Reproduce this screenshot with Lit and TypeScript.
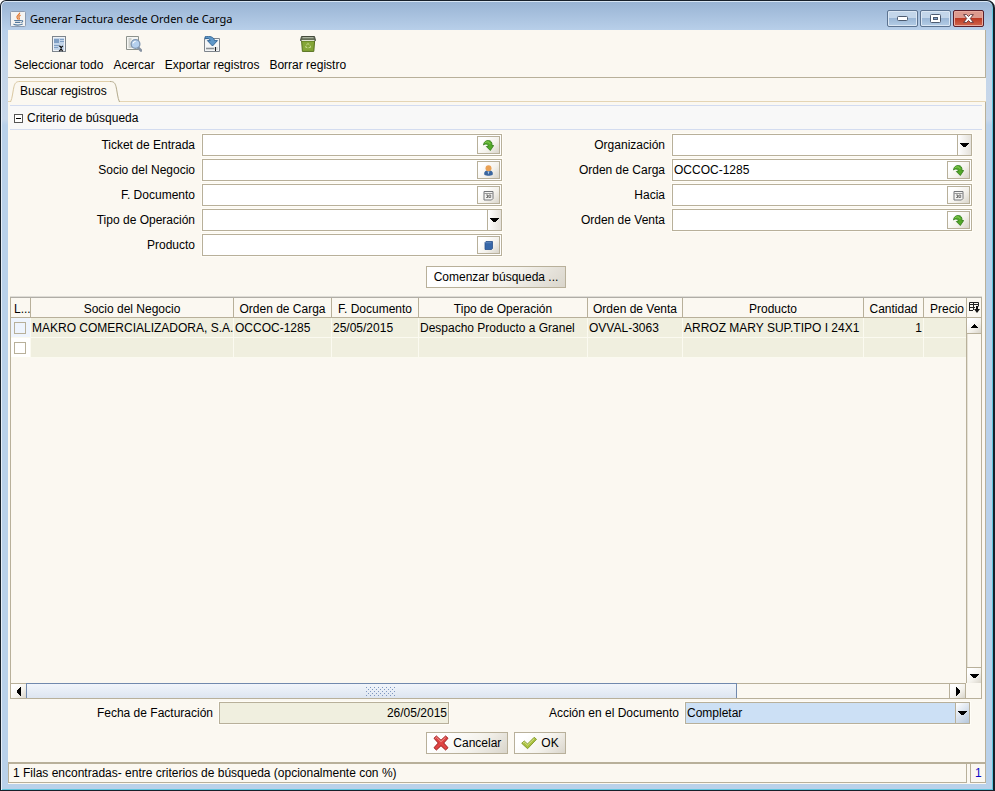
import { LitElement, html, svg, css } from "lit";
import { customElement } from "lit/decorators.js";

const icons = {
  java: svg`<rect x=".5" y=".5" width="15" height="15" rx="1" fill="#f4f4f2" stroke="#8c9bb0"/>
    <path d="M9.6 1.6c.6 2-3.6 2.8-2.6 5 .3.7 1 1.2 1 2M10.600 4.200c-1.800.9-2.200 1.700-1.400 2.800.4.7.1 1.200-.4 1.600" fill="none" stroke="#e2762c" stroke-width="1.200"/>
    <path d="M4.200 9.500h7M5 11.400h5.400M11.400 9.600c1.800-.3 1.800 1.500-.2 1.900M3.400 13.300c2.500.9 7 .8 9.300-.2" fill="none" stroke="#557a9e" stroke-width="1.100"/>`,
  select: svg`<rect x="1.500" y=".5" width="13" height="15" fill="#eef2f7" stroke="#7d858d"/>
    <rect x="3" y="2" width="10" height="12" fill="#c3d5e9"/>
    <path d="M3 3h5v4H3zM9 3h4v1H9zM9 5h4v1H9zM3 9h5v1H3zM3 11h4v1H3z" fill="#7f9fc4"/>
    <path d="M8 10l1.500.5L11 14.500l1 .5M12 10l-1.200.8L9 14.500 8 15" fill="none" stroke="#111" stroke-width="1.100"/>`,
  zoom: svg`<path d="M.5.500h12v13H.5z" fill="#f5f6f3" stroke="#8d928c"/>
    <path d="M2.500 3h3M2.500 5h2M2.500 7h2M2.500 9h2M2.500 11h4" stroke="#a9ada8"/>
    <path d="M12 11.500l3 3" stroke="#8793a2" stroke-width="2.600" stroke-linecap="round"/>
    <circle cx="9.500" cy="8" r="4.400" fill="#b5d0ee" stroke="#7f95b0" stroke-width="1.300"/>
    <path d="M7 7.500a2.600 2.600 0 0 1 2.600-2.100" fill="none" stroke="#fff"/>`,
  exportar: svg`<path d="M.5 2.500h15v13H.5z" fill="#f3f5f6" stroke="#7e858c"/>
    <path d="M2 11h12v3H2z" fill="#d5d8d9"/><path d="M2 12.500h8" stroke="#8a9095"/><path d="M11.500 11v4" stroke="#222"/>
    <path d="M1 .8C5.500-.4 10.200 1 10.500 4.600h3L8.500 10 3.400 4.600h2.800C5.900 2.800 4 2 1 2.800z" fill="#5e97c8" stroke="#2d6192" stroke-width=".9"/>`,
  borrar: svg`<path d="M1.600 5h13l-.8 10.400H2.400z" fill="#84a637" stroke="#56701f"/>
    <path d="M1.500.500h13l1 4H.5z" fill="#667059" stroke="#454b3c"/><path d="M2.500 1.700h11" stroke="#b9c1ad"/>
    <path d="M1.500 4.500h13" stroke="#dfe5d2"/>
    <path d="M6.400 9.300l1.400-1.900 1.500 1.300M10.200 9.600l.5 1.700-2.200.5M7.400 11.800l-1.800-.6.400-1.200" fill="none" stroke="#c5d88d"/>`,
  go: svg`<path d="M.5 5C.8 1.600 3.200.4 5.400.5 8.300.6 9.200 2.600 9 5.500h1.700L7.300 10.500 3.300 6.500h1.900C5.200 4.200 3 3.300.5 5z" fill="#52a829" stroke="#2f7a16" stroke-width=".8"/>
    <path d="M1.800 3c1.400-1.600 4.600-1.600 5.200.8" fill="none" stroke="#93d35d"/>`,
  person: svg`<path d="M1.500 10c-1-2.600.6-4.300 2-4.600h4c1.500.3 3 2 2 4.600-2 .9-6 .9-8 0z" fill="#3a669f"/>
    <circle cx="5.500" cy="3.300" r="3" fill="#eaa155"/><path d="M4.500 6.500h2l-1 3z" fill="#b5cbe6"/>`,
  calendar: svg`<path d="M1 1.500h9v7l-1.500 1.500H1z" fill="#f4f4f2" stroke="#74777a"/><path d="M1 3.500h9" stroke="#999"/>
    <path d="M3 5h2v1.200H4h1v1.300H3M6 5h1.700v2.500H6z" fill="none" stroke="#555" stroke-width=".7"/>`,
  product: svg`<path d="M2 2.500L3 1.500h6.500v7l-1 1H2z" fill="#3767a8" stroke="#28508c" stroke-width=".8"/><path d="M2.300 2.700h6" stroke="#5f87bb"/>`,
  cancel: svg`<path d="M1 3.300L3.400 1 8 5.300 12.600 1 15 3.300 10.700 8l4.300 4.700-2.400 2.300L8 10.700 3.400 15 1 12.700 5.300 8z" fill="#e04444" stroke="#9c1b1b"/>
    <path d="M2.300 3.400L3.500 2.300 8 6.600l4.500-4.300" fill="none" stroke="#f49b94"/>`,
  ok: svg`<path d="M.7 8.300L3.300 6l3.200 3L13.200 2.300l2.300 2L6.600 13.700z" fill="#a9c03e" stroke="#7d9427" stroke-width=".9"/>
    <path d="M2 8l1.300-.9 3.200 3 6.800-6.600" fill="none" stroke="#d7e48a"/>`,
  down: svg`<path d="M0 0h9v1H8v1H7v1H6v1H3V3H2V2H1V1H0z"/>`,
  up: svg`<path d="M4 0h1v1h1v1h1v1h1v1H1V3h1V2h1V1h1z"/>`,
  left: svg`<path d="M4 0v9H3V8H2V7H1V6H0V3h1V2h1V1h1V0z"/>`,
  right: svg`<path d="M0 0v9h1V8h1V7h1V6h1V3H3V2H2V1H1V0z"/>`,
  columns: svg`<path d="M.5 8.500v-8h9v4M0 2.500h10M0 5.500h6M0 8.500h4M4.500 0v8" fill="none" stroke="#222"/>
    <path d="M7 4h2v3h2L8 11 5 7h2z" fill="#111"/>`,
  min: svg`<rect x=".5" y=".5" width="10" height="4" rx="1" fill="#fff" stroke="#4d5b70"/>`,
  max: svg`<rect x=".5" y=".5" width="10" height="8" rx="1" fill="#fff" stroke="#4d5b70"/><rect x="3.500" y="3.500" width="4" height="2" fill="#7ea0c8" stroke="#4d5b70"/>`,
  close: svg`<path d="M.6.600h3L5.500 2.500 7.400.6h3L7.300 4.500l3.100 3.900h-3L5.500 6.500 3.600 8.400h-3l3.100-3.900z" fill="#fff" stroke="#5c3338" stroke-width=".9"/>`,
};

const icon = (name: keyof typeof icons, w = 16, h = w) =>
  html`<svg width=${w} height=${h} viewBox="0 0 ${w} ${h}" aria-hidden="true">${icons[name]}</svg>`;

type Field = { id: string; label: string; kind: "go" | "person" | "calendar" | "product" | "combo"; value?: string };

const FIELDS: Field[] = [
  { id: "ticket", label: "Ticket de Entrada", kind: "go" },
  { id: "org", label: "Organización", kind: "combo" },
  { id: "socio", label: "Socio del Negocio", kind: "person" },
  { id: "carga", label: "Orden de Carga", kind: "go", value: "OCCOC-1285" },
  { id: "fecha", label: "F. Documento", kind: "calendar" },
  { id: "hacia", label: "Hacia", kind: "calendar" },
  { id: "tipo", label: "Tipo de Operación", kind: "combo" },
  { id: "venta", label: "Orden de Venta", kind: "go" },
  { id: "producto", label: "Producto", kind: "product" },
];

const COLUMNS = ["L...", "Socio del Negocio", "Orden de Carga", "F. Documento", "Tipo de Operación", "Orden de Venta", "Producto", "Cantidad", "Precio"];
const WIDTHS = [20, 203, 98, 87, 169, 95, 181, 60, 49];
const ROWS = [
  ["MAKRO COMERCIALIZADORA, S.A.", "OCCOC-1285", "25/05/2015", "Despacho Producto a Granel", "OVVAL-3063", "ARROZ MARY SUP.TIPO I 24X1", "1", ""],
  ["", "", "", "", "", "", "", ""],
];

@customElement("app-root")
export class AppRoot extends LitElement {
  static styles = css`
    :host {
      display: block;
      height: 100vh;
      min-height: 560px;
      font: 12px/16px "Liberation Sans", Arial, sans-serif;
      color: #000;
      --bg: #fbf8f1;
      --line: #b8b09a;
      --face: linear-gradient(135deg, #fff 20%, #f4f2ec 60%, #d9d5cb);
    }
    * { box-sizing: border-box; }
    svg { display: block; flex: none; }
    button, input, select { font: inherit; color: inherit; margin: 0; padding: 0; border-radius: 0; }
    button { display: flex; align-items: center; justify-content: center; white-space: nowrap; }

    .window {
      height: 100%;
      display: flex;
      flex-direction: column;
      padding: 0 7px 6px 6px;
      background: linear-gradient(#98b3d3, #b9d0ea 30px, #c3d5e9 60px, #c9d8ea 118px, #b9d1ea 124px);
      border: 1px solid #17202a;
      border-right-width: 2px;
      border-radius: 6px 8px 0 0;
      box-shadow: inset 0 1px #d8e6f4, inset 1px 0 #e6eef8, inset -1px -1px #5fc4dc;
    }
    .title { height: 29px; flex: none; display: flex; align-items: center; padding: 6px 2px 0 3px; gap: 4px; }
    .title h1 { font: 11px/16px "Noto Sans", "Open Sans", sans-serif; margin: 0; flex: 1; }
    .controls { display: flex; gap: 2px; }
    .controls button { width: 31px; height: 17px; border: 1px solid #5c7390; border-radius: 2px; background: linear-gradient(#c3d6ea 45%, #9bb7d6 50%, #b4cde6); box-shadow: inset 0 0 0 1px #dbe7f4; }
    .controls .close { border-color: #5a1f2b; background: linear-gradient(#dd9a8e 45%, #bd3a24 50%, #d0664c); box-shadow: inset 0 0 0 1px #e9aca0; }

    .body { flex: 1; min-height: 0; display: flex; flex-direction: column; background: var(--bg); margin: 0 0 0 1px; }
    .toolbar { display: flex; gap: 10px; height: 48px; flex: none; padding: 6px 6px 0; border: solid var(--line); border-width: 0 1px 1px 0; align-items: flex-start; }
    .toolbar button { flex-direction: column; gap: 5px; border: 0; background: none; }

    .tabs { display: flex; height: 24px; flex: none; padding: 3px 0 0 2px; background: linear-gradient(#e5d5b4, #e5d5b4) bottom / 100% 1px no-repeat; }
    .tab { border: 0; background: none; height: 21px; align-items: stretch; }
    .tab span { background: var(--bg); border-top: 1px solid #e0cfaa; padding: 1px 3px 0 0; }
    .tab .fill { fill: var(--bg); }
    .tab .edge { fill: none; stroke: #d9c7a0; }
    .tab .end .edge { stroke: #b3aa8c; }

    .panel { flex: 1; min-height: 0; display: flex; flex-direction: column; border-right: 1px solid var(--line); padding: 3px 3px 0 2px; }
    .criteria { display: flex; align-items: center; gap: 4px; height: 25px; flex: none; padding: 1px 4px 0; background: #f8f8f8; border: solid #d3dcf0; border-width: 1px 0; }
    .criteria i { width: 9px; height: 9px; border: 1px solid #555; background: linear-gradient(#000, #000) center / 5px 1px no-repeat #fff; }

    .form { display: grid; grid-template-columns: 185px minmax(0, 1fr) 156px minmax(0, 1fr); gap: 3px 7px; padding: 4px 10px 0 0; }
    label { text-align: right; line-height: 22px; white-space: nowrap; }
    .field { position: relative; height: 22px; min-width: 0; display: flex; background: #fff; border: 1px solid var(--line); box-shadow: 0 0 0 1px #fffdf7; }
    .field input, .field select { flex: 1; min-width: 0; height: 20px; border: 0; background: transparent; outline: 0; padding: 0 1px; appearance: none; }
    .field button { width: 23px; height: 18px; margin: 1px; border: 1px solid var(--line); background: var(--face); }
    .arrow { position: absolute; right: 0; top: 0; width: 14px; height: 20px; border-left: 1px solid var(--line); background: linear-gradient(90deg, #fff, #e4e1da); display: flex; align-items: center; justify-content: center; pointer-events: none; }

    .push { height: 22px; border: 1px solid var(--line); background: var(--face); padding: 0 6px; gap: 4px; }
    .search { align-self: center; margin: 10px 0 9px; padding: 0 7px; flex: none; }

    .grid { flex: 1; min-height: 120px; display: grid; grid-template: 20px minmax(0, 1fr) 15px / minmax(0, 1fr) 15px; border: 1px solid var(--line); border-top-color: #b0ada6; box-shadow: 0 -1px #dedcd6; }
    .view { grid-row: 1 / 3; overflow: hidden; }
    table { table-layout: fixed; border-collapse: separate; border-spacing: 0; min-width: 100%; width: 962px; }
    th { height: 20px; padding: 2px 0 0; font-weight: normal; border: solid var(--line); border-width: 0 1px 1px 0; white-space: nowrap; overflow: hidden; }
    th:first-child { text-align: left; padding-left: 3px; }
    th:last-child { text-align: left; padding-left: 6px; }
    td { height: 20px; padding: 0 1px; background: #f0efdf; border: solid #fbfaf0; border-width: 0 1px 1px 0; white-space: nowrap; overflow: hidden; }
    td:nth-child(8) { text-align: right; }
    td:first-child { background: #fff; padding-left: 3px; }
    tr.current td:first-child { background: #eef4fd; }
    td input { display: block; appearance: none; width: 12px; height: 12px; margin: 0; border: 1px solid var(--line); }
    .corner { border: 0; border-left: 1px solid var(--line); border-bottom: 1px solid var(--line); background: var(--bg); }
    .vbar { display: flex; flex-direction: column; border-left: 1px solid var(--line); }
    .vbar button, .hbar button { border: 0; background: var(--face); flex: none; }
    .vbar button { height: 15px; }
    .vtrack { flex: 1; border: solid var(--line); border-width: 1px 0; box-shadow: inset 1px 0 #e6e2d6; }
    .hbar { display: flex; border-top: 1px solid var(--line); border-right: 1px solid var(--line); }
    .hbar button { width: 15px; }
    .htrack { flex: 1; border-right: 1px solid var(--line); }
    .thumb { width: 77%; height: 100%; border: 1px solid #7189ad; border-width: 0 1px; box-shadow: 0 -1px #7189ad; background: linear-gradient(#f1f5fb, #dde5f0); display: flex; align-items: center; justify-content: center; }
    .grip { width: 30px; height: 9px; background: conic-gradient(at 1px 1px, transparent 75%, #7f97bf 0) 0 0 / 4px 4px, conic-gradient(at 1px 1px, transparent 75%, #7f97bf 0) 2px 2px / 4px 4px; }

    .footer { display: grid; grid-template-columns: 203px minmax(0, 230fr) 224px minmax(0, 285fr); column-gap: 6px; padding: 3px 12px 0 0; height: 33px; flex: none; }
    .readonly { background: #f0efdf; }
    .readonly input { text-align: right; }
    .selected { background: #cce0f5; }
    .selected .arrow { background: linear-gradient(135deg, #fff, #b5c7dc); }
    .actions { display: flex; justify-content: center; gap: 6px; height: 30px; flex: none; }

    .status { display: flex; gap: 3px; flex: none; height: 22px; padding-bottom: 1px; border-top: 2px solid var(--line); background: var(--bg); }
    .status p { margin: 0; border: 1px solid var(--line); border-top: 0; padding: 1px 4px 0; line-height: 16px; }
    .message { flex: 1; }
    .count { color: #0a0ac8; width: 16px; margin-right: 1px; }
  `;

  private field(f: Field) {
    return html`<label for=${f.id}>${f.label}</label>
      <div class="field">
        ${f.kind === "combo"
          ? html`<select id=${f.id}><option></option></select><span class="arrow">${icon("down", 9, 4)}</span>`
          : html`<input id=${f.id} type="text" .value=${f.value ?? ""} /><button type="button" aria-label=${`Buscar ${f.label}`}>${icon(f.kind, 11)}</button>`}
      </div>`;
  }

  private tool(name: keyof typeof icons, label: string) {
    return html`<button type="button">${icon(name)}<span>${label}</span></button>`;
  }

  render() {
    return html`<div class="window">
      <header class="title">
        ${icon("java")}
        <h1>Generar Factura desde Orden de Carga</h1>
        <div class="controls">
          <button aria-label="Minimizar">${icon("min", 11, 5)}</button>
          <button aria-label="Maximizar">${icon("max", 11, 9)}</button>
          <button class="close" aria-label="Cerrar">${icon("close", 11, 9)}</button>
        </div>
      </header>
      <main class="body">
        <nav class="toolbar">
          ${this.tool("select", "Seleccionar todo")} ${this.tool("zoom", "Acercar")}
          ${this.tool("exportar", "Exportar registros")} ${this.tool("borrar", "Borrar registro")}
        </nav>
        <div class="tabs" role="tablist">
          <button class="tab" role="tab" aria-selected="true">
            <svg width="10" height="21" viewBox="0 0 10 21"><path class="fill" d="M.5 21C2.500 17 3 9 4 5.500S6 .5 10 .5V21z"/><path class="edge" d="M.5 21C2.500 17 3 9 4 5.500S6 .5 10 .5"/></svg>
            <span>Buscar registros</span>
            <svg class="end" width="10" height="21" viewBox="0 0 10 21"><path class="fill" d="M0 .5C4 .5 5 2 6 5.500S7.500 17 9.500 21H0z"/><path class="edge" d="M0 .5C4 .5 5 2 6 5.500S7.500 17 9.500 21"/></svg>
          </button>
        </div>
        <section class="panel">
          <div class="criteria"><i></i><span>Criterio de búsqueda</span></div>
          <div class="form">${FIELDS.map((f) => this.field(f))}</div>
          <button class="push search" type="button">Comenzar búsqueda ...</button>
          <div class="grid">
            <div class="view">
              <table>
                <colgroup>${WIDTHS.map((w) => html`<col style="width:${w}px" />`)}</colgroup>
                <thead><tr>${COLUMNS.map((c) => html`<th>${c}</th>`)}</tr></thead>
                <tbody>
                  ${ROWS.map((r, i) => html`<tr class=${i === 0 ? "current" : ""}>
                    <td><input type="checkbox" aria-label=${`Fila ${i + 1}`} /></td>
                    ${r.map((c) => html`<td>${c}</td>`)}
                  </tr>`)}
                </tbody>
              </table>
            </div>
            <button class="corner" aria-label="Columnas">${icon("columns", 11)}</button>
            <div class="vbar">
              <button aria-label="Arriba">${icon("up", 9, 4)}</button>
              <div class="vtrack"></div>
              <button aria-label="Abajo">${icon("down", 9, 4)}</button>
            </div>
            <div class="hbar">
              <button aria-label="Izquierda">${icon("left", 4, 9)}</button>
              <div class="htrack"><div class="thumb"><div class="grip"></div></div></div>
              <button aria-label="Derecha">${icon("right", 4, 9)}</button>
            </div>
          </div>
          <div class="footer">
            <label for="ffact">Fecha de Facturación</label>
            <div class="field readonly"><input id="ffact" type="text" readonly .value=${"26/05/2015"} /></div>
            <label for="accion">Acción en el Documento</label>
            <div class="field selected">
              <select id="accion"><option>Completar</option></select><span class="arrow">${icon("down", 9, 4)}</span>
            </div>
          </div>
          <div class="actions">
            <button class="push" type="button">${icon("cancel")}Cancelar</button>
            <button class="push" type="button">${icon("ok")}OK</button>
          </div>
        </section>
        <footer class="status"><p class="message">1 Filas encontradas- entre criterios de búsqueda (opcionalmente con %)</p><p class="count">1</p></footer>
      </main>
    </div>`;
  }
}
